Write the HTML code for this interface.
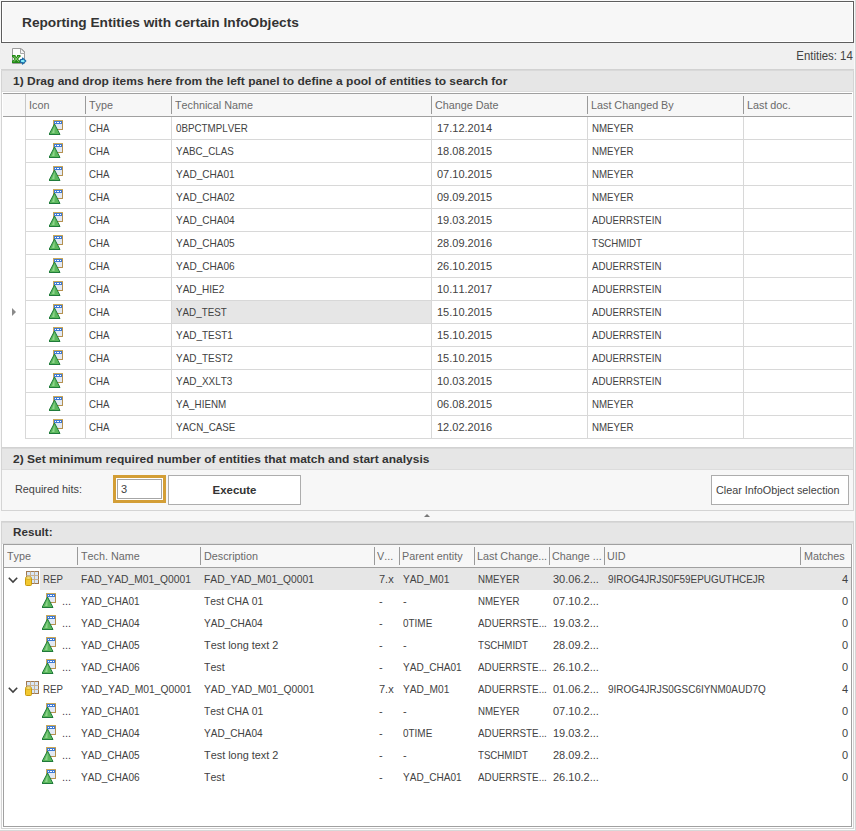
<!DOCTYPE html><html><head><meta charset="utf-8"><style>html,body{margin:0;padding:0;}body{font-kerning:none;width:856px;height:831px;position:relative;overflow:hidden;background:#f0f0f0;font-family:"Liberation Sans", sans-serif;}</style></head><body>
<div style="position:absolute;left:0px;top:0px;width:856px;height:831px;background:#f8f8f8"></div>
<div style="position:absolute;left:855px;top:0px;width:1px;height:831px;background:#d6d6d6"></div>
<div style="position:absolute;left:0px;top:43px;width:854px;height:26px;background:#f0f0f0"></div>
<div style="position:absolute;left:1px;top:1px;width:851px;height:40px;border:1px solid #5e5e5e;background:#f7f7f7;box-shadow:inset 0 0 0 1px #fff"></div>
<div style="position:absolute;top:14.60px;font-size:13.7px;line-height:15.303px;font-weight:bold;color:#333;white-space:pre;left:22px;">Reporting Entities with certain InfoObjects</div>
<svg style="position:absolute;left:12px;top:48px" width="16" height="17" viewBox="0 0 16 17">
<path d="M0.5 0.5 H9 L12.5 4 V15.5 H0.5 Z" fill="#fdfdfd" stroke="#9c9c9c"/>
<path d="M8.5 0.5 V5.5 H12.5" fill="#f4f4f4" stroke="#a8a8a8"/>
<path d="M9 0.5 L12.5 4" stroke="#8a8a8a"/>
<path d="M0 7 H3.5 V9 H0 Z M5 7 H8.5 V9 H5 Z M0 12.5 H8.5 V15 H0 Z" fill="#1f8a14"/>
<path d="M1.5 8 L7 14 M7 8 L1.5 14" stroke="#2b8c1c" stroke-width="2.6"/>
<path d="M1.8 8.3 L6.7 13.7 M6.7 8.3 L1.8 13.7" stroke="#a6e28e" stroke-width="0.8"/>
<path d="M8.5 11.5 H10.5 V10 L13.8 13 L10.5 16 V14.5 H8.5 Z" fill="#86eefa" stroke="#1c6aa6" stroke-width="1.2" stroke-linejoin="round"/>
</svg>
<div style="position:absolute;top:49.87px;font-size:12.3px;line-height:13.739px;font-weight:normal;color:#424242;white-space:pre;transform:scaleX(0.930);transform-origin:100% 0;right:3px;">Entities: 14</div>
<div style="position:absolute;left:1px;top:69px;width:853px;height:378px;background:#fff"></div>
<div style="position:absolute;left:1px;top:69px;width:1px;height:378px;background:#d4d4d4"></div>
<div style="position:absolute;left:853px;top:69px;width:1px;height:378px;background:#d4d4d4"></div>
<div style="position:absolute;left:1px;top:69px;width:853px;height:1px;background:#d2d2d2"></div>
<div style="position:absolute;left:1px;top:70px;width:853px;height:1px;background:#d9d9d9"></div>
<div style="position:absolute;left:2px;top:71px;width:851px;height:20px;background:#e6e6e6"></div>
<div style="position:absolute;left:2px;top:91px;width:851px;height:1px;background:#dcdcdc"></div>
<div style="position:absolute;top:75.05px;font-size:11px;line-height:12.287px;font-weight:bold;color:#333;white-space:pre;transform:scaleX(1.090);transform-origin:0 0;left:13px;">1) Drag and drop items here from the left panel to define a pool of entities to search for</div>
<div style="position:absolute;left:3px;top:93px;width:849px;height:1px;background:#a0a0a0"></div>
<div style="position:absolute;left:3px;top:94px;width:849px;height:22px;background:#f7f7f7"></div>
<div style="position:absolute;left:3px;top:116px;width:849px;height:1px;background:#a0a0a0"></div>
<div style="position:absolute;left:25px;top:94px;width:1px;height:22px;background:#c8c8c8"></div>
<div style="position:absolute;left:85px;top:96px;width:1px;height:18px;background:#9a9a9a"></div>
<div style="position:absolute;left:171px;top:96px;width:1px;height:18px;background:#9a9a9a"></div>
<div style="position:absolute;left:431px;top:96px;width:1px;height:18px;background:#9a9a9a"></div>
<div style="position:absolute;left:587px;top:96px;width:1px;height:18px;background:#9a9a9a"></div>
<div style="position:absolute;left:743px;top:96px;width:1px;height:18px;background:#9a9a9a"></div>
<div style="position:absolute;top:99.05px;font-size:11px;line-height:12.287px;font-weight:normal;color:#6a6a6a;white-space:pre;transform:scaleX(0.980);transform-origin:0 0;left:29px;">Icon</div>
<div style="position:absolute;top:99.05px;font-size:11px;line-height:12.287px;font-weight:normal;color:#6a6a6a;white-space:pre;transform:scaleX(0.980);transform-origin:0 0;left:89px;">Type</div>
<div style="position:absolute;top:99.05px;font-size:11px;line-height:12.287px;font-weight:normal;color:#6a6a6a;white-space:pre;transform:scaleX(0.980);transform-origin:0 0;left:175px;">Technical Name</div>
<div style="position:absolute;top:99.05px;font-size:11px;line-height:12.287px;font-weight:normal;color:#6a6a6a;white-space:pre;transform:scaleX(0.980);transform-origin:0 0;left:435px;">Change Date</div>
<div style="position:absolute;top:99.05px;font-size:11px;line-height:12.287px;font-weight:normal;color:#6a6a6a;white-space:pre;transform:scaleX(0.980);transform-origin:0 0;left:591px;">Last Changed By</div>
<div style="position:absolute;top:99.05px;font-size:11px;line-height:12.287px;font-weight:normal;color:#6a6a6a;white-space:pre;transform:scaleX(0.980);transform-origin:0 0;left:747px;">Last doc.</div>
<div style="position:absolute;left:26px;top:139px;width:826px;height:1px;background:#d8d8d8"></div>
<svg style="position:absolute;left:49px;top:120px" width="15" height="15" viewBox="0 0 15 15">
<rect x="4.5" y="0.5" width="9" height="9" fill="#e3e9f3" stroke="#c9a85a"/>
<path d="M13.5 1 V9.5 H6" fill="none" stroke="#b39050"/>
<rect x="5" y="1" width="8" height="3" fill="#3f7bd6"/>
<rect x="6" y="2" width="1" height="1" fill="#fff"/><rect x="8" y="2" width="2" height="1" fill="#fff"/><rect x="11" y="2" width="1" height="1" fill="#fff"/>
<rect x="5" y="4" width="1" height="5" fill="#3f7bd6"/>
<path d="M5.5 4 L0 14.5 L11 14.5 Z" fill="#5cb85c" stroke="#1f7a3a" stroke-width="1"/>
<path d="M5.5 6 L3 13 L5.5 13 Z" fill="#8fd48f"/>
</svg>
<div style="position:absolute;top:122.05px;font-size:11px;line-height:12.287px;font-weight:normal;color:#424242;white-space:pre;transform:scaleX(0.880);transform-origin:0 0;left:89px;">CHA</div>
<div style="position:absolute;top:122.05px;font-size:11px;line-height:12.287px;font-weight:normal;color:#424242;white-space:pre;transform:scaleX(0.889);transform-origin:0 0;left:176px;">0BPCTMPLVER</div>
<div style="position:absolute;top:122.05px;font-size:11px;line-height:12.287px;font-weight:normal;color:#424242;white-space:pre;left:437px;">17.12.2014</div>
<div style="position:absolute;top:122.05px;font-size:11px;line-height:12.287px;font-weight:normal;color:#424242;white-space:pre;transform:scaleX(0.880);transform-origin:0 0;left:592px;">NMEYER</div>
<div style="position:absolute;left:26px;top:162px;width:826px;height:1px;background:#d8d8d8"></div>
<svg style="position:absolute;left:49px;top:143px" width="15" height="15" viewBox="0 0 15 15">
<rect x="4.5" y="0.5" width="9" height="9" fill="#e3e9f3" stroke="#c9a85a"/>
<path d="M13.5 1 V9.5 H6" fill="none" stroke="#b39050"/>
<rect x="5" y="1" width="8" height="3" fill="#3f7bd6"/>
<rect x="6" y="2" width="1" height="1" fill="#fff"/><rect x="8" y="2" width="2" height="1" fill="#fff"/><rect x="11" y="2" width="1" height="1" fill="#fff"/>
<rect x="5" y="4" width="1" height="5" fill="#3f7bd6"/>
<path d="M5.5 4 L0 14.5 L11 14.5 Z" fill="#5cb85c" stroke="#1f7a3a" stroke-width="1"/>
<path d="M5.5 6 L3 13 L5.5 13 Z" fill="#8fd48f"/>
</svg>
<div style="position:absolute;top:145.04px;font-size:11px;line-height:12.287px;font-weight:normal;color:#424242;white-space:pre;transform:scaleX(0.880);transform-origin:0 0;left:89px;">CHA</div>
<div style="position:absolute;top:145.04px;font-size:11px;line-height:12.287px;font-weight:normal;color:#424242;white-space:pre;transform:scaleX(0.891);transform-origin:0 0;left:176px;">YABC_CLAS</div>
<div style="position:absolute;top:145.04px;font-size:11px;line-height:12.287px;font-weight:normal;color:#424242;white-space:pre;left:437px;">18.08.2015</div>
<div style="position:absolute;top:145.04px;font-size:11px;line-height:12.287px;font-weight:normal;color:#424242;white-space:pre;transform:scaleX(0.880);transform-origin:0 0;left:592px;">NMEYER</div>
<div style="position:absolute;left:26px;top:185px;width:826px;height:1px;background:#d8d8d8"></div>
<svg style="position:absolute;left:49px;top:166px" width="15" height="15" viewBox="0 0 15 15">
<rect x="4.5" y="0.5" width="9" height="9" fill="#e3e9f3" stroke="#c9a85a"/>
<path d="M13.5 1 V9.5 H6" fill="none" stroke="#b39050"/>
<rect x="5" y="1" width="8" height="3" fill="#3f7bd6"/>
<rect x="6" y="2" width="1" height="1" fill="#fff"/><rect x="8" y="2" width="2" height="1" fill="#fff"/><rect x="11" y="2" width="1" height="1" fill="#fff"/>
<rect x="5" y="4" width="1" height="5" fill="#3f7bd6"/>
<path d="M5.5 4 L0 14.5 L11 14.5 Z" fill="#5cb85c" stroke="#1f7a3a" stroke-width="1"/>
<path d="M5.5 6 L3 13 L5.5 13 Z" fill="#8fd48f"/>
</svg>
<div style="position:absolute;top:168.04px;font-size:11px;line-height:12.287px;font-weight:normal;color:#424242;white-space:pre;transform:scaleX(0.880);transform-origin:0 0;left:89px;">CHA</div>
<div style="position:absolute;top:168.04px;font-size:11px;line-height:12.287px;font-weight:normal;color:#424242;white-space:pre;transform:scaleX(0.914);transform-origin:0 0;left:176px;">YAD_CHA01</div>
<div style="position:absolute;top:168.04px;font-size:11px;line-height:12.287px;font-weight:normal;color:#424242;white-space:pre;left:437px;">07.10.2015</div>
<div style="position:absolute;top:168.04px;font-size:11px;line-height:12.287px;font-weight:normal;color:#424242;white-space:pre;transform:scaleX(0.880);transform-origin:0 0;left:592px;">NMEYER</div>
<div style="position:absolute;left:26px;top:208px;width:826px;height:1px;background:#d8d8d8"></div>
<svg style="position:absolute;left:49px;top:189px" width="15" height="15" viewBox="0 0 15 15">
<rect x="4.5" y="0.5" width="9" height="9" fill="#e3e9f3" stroke="#c9a85a"/>
<path d="M13.5 1 V9.5 H6" fill="none" stroke="#b39050"/>
<rect x="5" y="1" width="8" height="3" fill="#3f7bd6"/>
<rect x="6" y="2" width="1" height="1" fill="#fff"/><rect x="8" y="2" width="2" height="1" fill="#fff"/><rect x="11" y="2" width="1" height="1" fill="#fff"/>
<rect x="5" y="4" width="1" height="5" fill="#3f7bd6"/>
<path d="M5.5 4 L0 14.5 L11 14.5 Z" fill="#5cb85c" stroke="#1f7a3a" stroke-width="1"/>
<path d="M5.5 6 L3 13 L5.5 13 Z" fill="#8fd48f"/>
</svg>
<div style="position:absolute;top:191.04px;font-size:11px;line-height:12.287px;font-weight:normal;color:#424242;white-space:pre;transform:scaleX(0.880);transform-origin:0 0;left:89px;">CHA</div>
<div style="position:absolute;top:191.04px;font-size:11px;line-height:12.287px;font-weight:normal;color:#424242;white-space:pre;transform:scaleX(0.914);transform-origin:0 0;left:176px;">YAD_CHA02</div>
<div style="position:absolute;top:191.04px;font-size:11px;line-height:12.287px;font-weight:normal;color:#424242;white-space:pre;left:437px;">09.09.2015</div>
<div style="position:absolute;top:191.04px;font-size:11px;line-height:12.287px;font-weight:normal;color:#424242;white-space:pre;transform:scaleX(0.880);transform-origin:0 0;left:592px;">NMEYER</div>
<div style="position:absolute;left:26px;top:231px;width:826px;height:1px;background:#d8d8d8"></div>
<svg style="position:absolute;left:49px;top:212px" width="15" height="15" viewBox="0 0 15 15">
<rect x="4.5" y="0.5" width="9" height="9" fill="#e3e9f3" stroke="#c9a85a"/>
<path d="M13.5 1 V9.5 H6" fill="none" stroke="#b39050"/>
<rect x="5" y="1" width="8" height="3" fill="#3f7bd6"/>
<rect x="6" y="2" width="1" height="1" fill="#fff"/><rect x="8" y="2" width="2" height="1" fill="#fff"/><rect x="11" y="2" width="1" height="1" fill="#fff"/>
<rect x="5" y="4" width="1" height="5" fill="#3f7bd6"/>
<path d="M5.5 4 L0 14.5 L11 14.5 Z" fill="#5cb85c" stroke="#1f7a3a" stroke-width="1"/>
<path d="M5.5 6 L3 13 L5.5 13 Z" fill="#8fd48f"/>
</svg>
<div style="position:absolute;top:214.04px;font-size:11px;line-height:12.287px;font-weight:normal;color:#424242;white-space:pre;transform:scaleX(0.880);transform-origin:0 0;left:89px;">CHA</div>
<div style="position:absolute;top:214.04px;font-size:11px;line-height:12.287px;font-weight:normal;color:#424242;white-space:pre;transform:scaleX(0.914);transform-origin:0 0;left:176px;">YAD_CHA04</div>
<div style="position:absolute;top:214.04px;font-size:11px;line-height:12.287px;font-weight:normal;color:#424242;white-space:pre;left:437px;">19.03.2015</div>
<div style="position:absolute;top:214.04px;font-size:11px;line-height:12.287px;font-weight:normal;color:#424242;white-space:pre;transform:scaleX(0.880);transform-origin:0 0;left:592px;">ADUERRSTEIN</div>
<div style="position:absolute;left:26px;top:254px;width:826px;height:1px;background:#d8d8d8"></div>
<svg style="position:absolute;left:49px;top:235px" width="15" height="15" viewBox="0 0 15 15">
<rect x="4.5" y="0.5" width="9" height="9" fill="#e3e9f3" stroke="#c9a85a"/>
<path d="M13.5 1 V9.5 H6" fill="none" stroke="#b39050"/>
<rect x="5" y="1" width="8" height="3" fill="#3f7bd6"/>
<rect x="6" y="2" width="1" height="1" fill="#fff"/><rect x="8" y="2" width="2" height="1" fill="#fff"/><rect x="11" y="2" width="1" height="1" fill="#fff"/>
<rect x="5" y="4" width="1" height="5" fill="#3f7bd6"/>
<path d="M5.5 4 L0 14.5 L11 14.5 Z" fill="#5cb85c" stroke="#1f7a3a" stroke-width="1"/>
<path d="M5.5 6 L3 13 L5.5 13 Z" fill="#8fd48f"/>
</svg>
<div style="position:absolute;top:237.04px;font-size:11px;line-height:12.287px;font-weight:normal;color:#424242;white-space:pre;transform:scaleX(0.880);transform-origin:0 0;left:89px;">CHA</div>
<div style="position:absolute;top:237.04px;font-size:11px;line-height:12.287px;font-weight:normal;color:#424242;white-space:pre;transform:scaleX(0.914);transform-origin:0 0;left:176px;">YAD_CHA05</div>
<div style="position:absolute;top:237.04px;font-size:11px;line-height:12.287px;font-weight:normal;color:#424242;white-space:pre;left:437px;">28.09.2016</div>
<div style="position:absolute;top:237.04px;font-size:11px;line-height:12.287px;font-weight:normal;color:#424242;white-space:pre;transform:scaleX(0.880);transform-origin:0 0;left:592px;">TSCHMIDT</div>
<div style="position:absolute;left:26px;top:277px;width:826px;height:1px;background:#d8d8d8"></div>
<svg style="position:absolute;left:49px;top:258px" width="15" height="15" viewBox="0 0 15 15">
<rect x="4.5" y="0.5" width="9" height="9" fill="#e3e9f3" stroke="#c9a85a"/>
<path d="M13.5 1 V9.5 H6" fill="none" stroke="#b39050"/>
<rect x="5" y="1" width="8" height="3" fill="#3f7bd6"/>
<rect x="6" y="2" width="1" height="1" fill="#fff"/><rect x="8" y="2" width="2" height="1" fill="#fff"/><rect x="11" y="2" width="1" height="1" fill="#fff"/>
<rect x="5" y="4" width="1" height="5" fill="#3f7bd6"/>
<path d="M5.5 4 L0 14.5 L11 14.5 Z" fill="#5cb85c" stroke="#1f7a3a" stroke-width="1"/>
<path d="M5.5 6 L3 13 L5.5 13 Z" fill="#8fd48f"/>
</svg>
<div style="position:absolute;top:260.05px;font-size:11px;line-height:12.287px;font-weight:normal;color:#424242;white-space:pre;transform:scaleX(0.880);transform-origin:0 0;left:89px;">CHA</div>
<div style="position:absolute;top:260.05px;font-size:11px;line-height:12.287px;font-weight:normal;color:#424242;white-space:pre;transform:scaleX(0.914);transform-origin:0 0;left:176px;">YAD_CHA06</div>
<div style="position:absolute;top:260.05px;font-size:11px;line-height:12.287px;font-weight:normal;color:#424242;white-space:pre;left:437px;">26.10.2015</div>
<div style="position:absolute;top:260.05px;font-size:11px;line-height:12.287px;font-weight:normal;color:#424242;white-space:pre;transform:scaleX(0.880);transform-origin:0 0;left:592px;">ADUERRSTEIN</div>
<div style="position:absolute;left:26px;top:300px;width:826px;height:1px;background:#d8d8d8"></div>
<svg style="position:absolute;left:49px;top:281px" width="15" height="15" viewBox="0 0 15 15">
<rect x="4.5" y="0.5" width="9" height="9" fill="#e3e9f3" stroke="#c9a85a"/>
<path d="M13.5 1 V9.5 H6" fill="none" stroke="#b39050"/>
<rect x="5" y="1" width="8" height="3" fill="#3f7bd6"/>
<rect x="6" y="2" width="1" height="1" fill="#fff"/><rect x="8" y="2" width="2" height="1" fill="#fff"/><rect x="11" y="2" width="1" height="1" fill="#fff"/>
<rect x="5" y="4" width="1" height="5" fill="#3f7bd6"/>
<path d="M5.5 4 L0 14.5 L11 14.5 Z" fill="#5cb85c" stroke="#1f7a3a" stroke-width="1"/>
<path d="M5.5 6 L3 13 L5.5 13 Z" fill="#8fd48f"/>
</svg>
<div style="position:absolute;top:283.05px;font-size:11px;line-height:12.287px;font-weight:normal;color:#424242;white-space:pre;transform:scaleX(0.880);transform-origin:0 0;left:89px;">CHA</div>
<div style="position:absolute;top:283.05px;font-size:11px;line-height:12.287px;font-weight:normal;color:#424242;white-space:pre;transform:scaleX(0.908);transform-origin:0 0;left:176px;">YAD_HIE2</div>
<div style="position:absolute;top:283.05px;font-size:11px;line-height:12.287px;font-weight:normal;color:#424242;white-space:pre;left:437px;">10.11.2017</div>
<div style="position:absolute;top:283.05px;font-size:11px;line-height:12.287px;font-weight:normal;color:#424242;white-space:pre;transform:scaleX(0.880);transform-origin:0 0;left:592px;">ADUERRSTEIN</div>
<div style="position:absolute;left:172px;top:301px;width:259px;height:22px;background:#e6e6e6"></div>
<svg style="position:absolute;left:12px;top:308px" width="5" height="8"><path d="M0 0 L4 4 L0 8 Z" fill="#8a8a8a"/></svg>
<div style="position:absolute;left:26px;top:323px;width:826px;height:1px;background:#d8d8d8"></div>
<svg style="position:absolute;left:49px;top:304px" width="15" height="15" viewBox="0 0 15 15">
<rect x="4.5" y="0.5" width="9" height="9" fill="#e3e9f3" stroke="#c9a85a"/>
<path d="M13.5 1 V9.5 H6" fill="none" stroke="#b39050"/>
<rect x="5" y="1" width="8" height="3" fill="#3f7bd6"/>
<rect x="6" y="2" width="1" height="1" fill="#fff"/><rect x="8" y="2" width="2" height="1" fill="#fff"/><rect x="11" y="2" width="1" height="1" fill="#fff"/>
<rect x="5" y="4" width="1" height="5" fill="#3f7bd6"/>
<path d="M5.5 4 L0 14.5 L11 14.5 Z" fill="#5cb85c" stroke="#1f7a3a" stroke-width="1"/>
<path d="M5.5 6 L3 13 L5.5 13 Z" fill="#8fd48f"/>
</svg>
<div style="position:absolute;top:306.05px;font-size:11px;line-height:12.287px;font-weight:normal;color:#424242;white-space:pre;transform:scaleX(0.880);transform-origin:0 0;left:89px;">CHA</div>
<div style="position:absolute;top:306.05px;font-size:11px;line-height:12.287px;font-weight:normal;color:#424242;white-space:pre;transform:scaleX(0.893);transform-origin:0 0;left:176px;">YAD_TEST</div>
<div style="position:absolute;top:306.05px;font-size:11px;line-height:12.287px;font-weight:normal;color:#424242;white-space:pre;left:437px;">15.10.2015</div>
<div style="position:absolute;top:306.05px;font-size:11px;line-height:12.287px;font-weight:normal;color:#424242;white-space:pre;transform:scaleX(0.880);transform-origin:0 0;left:592px;">ADUERRSTEIN</div>
<div style="position:absolute;left:26px;top:346px;width:826px;height:1px;background:#d8d8d8"></div>
<svg style="position:absolute;left:49px;top:327px" width="15" height="15" viewBox="0 0 15 15">
<rect x="4.5" y="0.5" width="9" height="9" fill="#e3e9f3" stroke="#c9a85a"/>
<path d="M13.5 1 V9.5 H6" fill="none" stroke="#b39050"/>
<rect x="5" y="1" width="8" height="3" fill="#3f7bd6"/>
<rect x="6" y="2" width="1" height="1" fill="#fff"/><rect x="8" y="2" width="2" height="1" fill="#fff"/><rect x="11" y="2" width="1" height="1" fill="#fff"/>
<rect x="5" y="4" width="1" height="5" fill="#3f7bd6"/>
<path d="M5.5 4 L0 14.5 L11 14.5 Z" fill="#5cb85c" stroke="#1f7a3a" stroke-width="1"/>
<path d="M5.5 6 L3 13 L5.5 13 Z" fill="#8fd48f"/>
</svg>
<div style="position:absolute;top:329.05px;font-size:11px;line-height:12.287px;font-weight:normal;color:#424242;white-space:pre;transform:scaleX(0.880);transform-origin:0 0;left:89px;">CHA</div>
<div style="position:absolute;top:329.05px;font-size:11px;line-height:12.287px;font-weight:normal;color:#424242;white-space:pre;transform:scaleX(0.903);transform-origin:0 0;left:176px;">YAD_TEST1</div>
<div style="position:absolute;top:329.05px;font-size:11px;line-height:12.287px;font-weight:normal;color:#424242;white-space:pre;left:437px;">15.10.2015</div>
<div style="position:absolute;top:329.05px;font-size:11px;line-height:12.287px;font-weight:normal;color:#424242;white-space:pre;transform:scaleX(0.880);transform-origin:0 0;left:592px;">ADUERRSTEIN</div>
<div style="position:absolute;left:26px;top:369px;width:826px;height:1px;background:#d8d8d8"></div>
<svg style="position:absolute;left:49px;top:350px" width="15" height="15" viewBox="0 0 15 15">
<rect x="4.5" y="0.5" width="9" height="9" fill="#e3e9f3" stroke="#c9a85a"/>
<path d="M13.5 1 V9.5 H6" fill="none" stroke="#b39050"/>
<rect x="5" y="1" width="8" height="3" fill="#3f7bd6"/>
<rect x="6" y="2" width="1" height="1" fill="#fff"/><rect x="8" y="2" width="2" height="1" fill="#fff"/><rect x="11" y="2" width="1" height="1" fill="#fff"/>
<rect x="5" y="4" width="1" height="5" fill="#3f7bd6"/>
<path d="M5.5 4 L0 14.5 L11 14.5 Z" fill="#5cb85c" stroke="#1f7a3a" stroke-width="1"/>
<path d="M5.5 6 L3 13 L5.5 13 Z" fill="#8fd48f"/>
</svg>
<div style="position:absolute;top:352.05px;font-size:11px;line-height:12.287px;font-weight:normal;color:#424242;white-space:pre;transform:scaleX(0.880);transform-origin:0 0;left:89px;">CHA</div>
<div style="position:absolute;top:352.05px;font-size:11px;line-height:12.287px;font-weight:normal;color:#424242;white-space:pre;transform:scaleX(0.903);transform-origin:0 0;left:176px;">YAD_TEST2</div>
<div style="position:absolute;top:352.05px;font-size:11px;line-height:12.287px;font-weight:normal;color:#424242;white-space:pre;left:437px;">15.10.2015</div>
<div style="position:absolute;top:352.05px;font-size:11px;line-height:12.287px;font-weight:normal;color:#424242;white-space:pre;transform:scaleX(0.880);transform-origin:0 0;left:592px;">ADUERRSTEIN</div>
<div style="position:absolute;left:26px;top:392px;width:826px;height:1px;background:#d8d8d8"></div>
<svg style="position:absolute;left:49px;top:373px" width="15" height="15" viewBox="0 0 15 15">
<rect x="4.5" y="0.5" width="9" height="9" fill="#e3e9f3" stroke="#c9a85a"/>
<path d="M13.5 1 V9.5 H6" fill="none" stroke="#b39050"/>
<rect x="5" y="1" width="8" height="3" fill="#3f7bd6"/>
<rect x="6" y="2" width="1" height="1" fill="#fff"/><rect x="8" y="2" width="2" height="1" fill="#fff"/><rect x="11" y="2" width="1" height="1" fill="#fff"/>
<rect x="5" y="4" width="1" height="5" fill="#3f7bd6"/>
<path d="M5.5 4 L0 14.5 L11 14.5 Z" fill="#5cb85c" stroke="#1f7a3a" stroke-width="1"/>
<path d="M5.5 6 L3 13 L5.5 13 Z" fill="#8fd48f"/>
</svg>
<div style="position:absolute;top:375.05px;font-size:11px;line-height:12.287px;font-weight:normal;color:#424242;white-space:pre;transform:scaleX(0.880);transform-origin:0 0;left:89px;">CHA</div>
<div style="position:absolute;top:375.05px;font-size:11px;line-height:12.287px;font-weight:normal;color:#424242;white-space:pre;transform:scaleX(0.904);transform-origin:0 0;left:176px;">YAD_XXLT3</div>
<div style="position:absolute;top:375.05px;font-size:11px;line-height:12.287px;font-weight:normal;color:#424242;white-space:pre;left:437px;">10.03.2015</div>
<div style="position:absolute;top:375.05px;font-size:11px;line-height:12.287px;font-weight:normal;color:#424242;white-space:pre;transform:scaleX(0.880);transform-origin:0 0;left:592px;">ADUERRSTEIN</div>
<div style="position:absolute;left:26px;top:415px;width:826px;height:1px;background:#d8d8d8"></div>
<svg style="position:absolute;left:49px;top:396px" width="15" height="15" viewBox="0 0 15 15">
<rect x="4.5" y="0.5" width="9" height="9" fill="#e3e9f3" stroke="#c9a85a"/>
<path d="M13.5 1 V9.5 H6" fill="none" stroke="#b39050"/>
<rect x="5" y="1" width="8" height="3" fill="#3f7bd6"/>
<rect x="6" y="2" width="1" height="1" fill="#fff"/><rect x="8" y="2" width="2" height="1" fill="#fff"/><rect x="11" y="2" width="1" height="1" fill="#fff"/>
<rect x="5" y="4" width="1" height="5" fill="#3f7bd6"/>
<path d="M5.5 4 L0 14.5 L11 14.5 Z" fill="#5cb85c" stroke="#1f7a3a" stroke-width="1"/>
<path d="M5.5 6 L3 13 L5.5 13 Z" fill="#8fd48f"/>
</svg>
<div style="position:absolute;top:398.05px;font-size:11px;line-height:12.287px;font-weight:normal;color:#424242;white-space:pre;transform:scaleX(0.880);transform-origin:0 0;left:89px;">CHA</div>
<div style="position:absolute;top:398.05px;font-size:11px;line-height:12.287px;font-weight:normal;color:#424242;white-space:pre;transform:scaleX(0.893);transform-origin:0 0;left:176px;">YA_HIENM</div>
<div style="position:absolute;top:398.05px;font-size:11px;line-height:12.287px;font-weight:normal;color:#424242;white-space:pre;left:437px;">06.08.2015</div>
<div style="position:absolute;top:398.05px;font-size:11px;line-height:12.287px;font-weight:normal;color:#424242;white-space:pre;transform:scaleX(0.880);transform-origin:0 0;left:592px;">NMEYER</div>
<div style="position:absolute;left:26px;top:438px;width:826px;height:1px;background:#d8d8d8"></div>
<svg style="position:absolute;left:49px;top:419px" width="15" height="15" viewBox="0 0 15 15">
<rect x="4.5" y="0.5" width="9" height="9" fill="#e3e9f3" stroke="#c9a85a"/>
<path d="M13.5 1 V9.5 H6" fill="none" stroke="#b39050"/>
<rect x="5" y="1" width="8" height="3" fill="#3f7bd6"/>
<rect x="6" y="2" width="1" height="1" fill="#fff"/><rect x="8" y="2" width="2" height="1" fill="#fff"/><rect x="11" y="2" width="1" height="1" fill="#fff"/>
<rect x="5" y="4" width="1" height="5" fill="#3f7bd6"/>
<path d="M5.5 4 L0 14.5 L11 14.5 Z" fill="#5cb85c" stroke="#1f7a3a" stroke-width="1"/>
<path d="M5.5 6 L3 13 L5.5 13 Z" fill="#8fd48f"/>
</svg>
<div style="position:absolute;top:421.05px;font-size:11px;line-height:12.287px;font-weight:normal;color:#424242;white-space:pre;transform:scaleX(0.880);transform-origin:0 0;left:89px;">CHA</div>
<div style="position:absolute;top:421.05px;font-size:11px;line-height:12.287px;font-weight:normal;color:#424242;white-space:pre;transform:scaleX(0.891);transform-origin:0 0;left:176px;">YACN_CASE</div>
<div style="position:absolute;top:421.05px;font-size:11px;line-height:12.287px;font-weight:normal;color:#424242;white-space:pre;left:437px;">12.02.2016</div>
<div style="position:absolute;top:421.05px;font-size:11px;line-height:12.287px;font-weight:normal;color:#424242;white-space:pre;transform:scaleX(0.880);transform-origin:0 0;left:592px;">NMEYER</div>
<div style="position:absolute;left:25px;top:117px;width:1px;height:322px;background:#d8d8d8"></div>
<div style="position:absolute;left:85px;top:117px;width:1px;height:322px;background:#d8d8d8"></div>
<div style="position:absolute;left:171px;top:117px;width:1px;height:322px;background:#d8d8d8"></div>
<div style="position:absolute;left:431px;top:117px;width:1px;height:322px;background:#d8d8d8"></div>
<div style="position:absolute;left:587px;top:117px;width:1px;height:322px;background:#d8d8d8"></div>
<div style="position:absolute;left:743px;top:117px;width:1px;height:322px;background:#d8d8d8"></div>
<div style="position:absolute;left:1px;top:447px;width:853px;height:1px;background:#d2d2d2"></div>
<div style="position:absolute;left:1px;top:448px;width:853px;height:1px;background:#d9d9d9"></div>
<div style="position:absolute;left:2px;top:449px;width:851px;height:20px;background:#e6e6e6"></div>
<div style="position:absolute;left:1px;top:447px;width:1px;height:64px;background:#d4d4d4"></div>
<div style="position:absolute;left:853px;top:447px;width:1px;height:64px;background:#d4d4d4"></div>
<div style="position:absolute;top:453.05px;font-size:11px;line-height:12.287px;font-weight:bold;color:#333;white-space:pre;transform:scaleX(1.090);transform-origin:0 0;left:13px;">2) Set minimum required number of entities that match and start analysis</div>
<div style="position:absolute;left:2px;top:469px;width:851px;height:41px;background:#f7f7f7"></div>
<div style="position:absolute;left:2px;top:469px;width:851px;height:1px;background:#dcdcdc"></div>
<div style="position:absolute;left:1px;top:510px;width:853px;height:1px;background:#d4d4d4"></div>
<div style="position:absolute;top:483.05px;font-size:11px;line-height:12.287px;font-weight:normal;color:#424242;white-space:pre;transform:scaleX(0.986);transform-origin:0 0;left:15px;">Required hits:</div>
<div style="position:absolute;left:113px;top:475px;width:47px;height:22px;border:3px solid #d39e36;background:#fff"></div>
<div style="position:absolute;left:117px;top:479px;width:43px;height:18px;border:1px solid #a6a6a6;background:#fff"></div>
<div style="position:absolute;top:483.05px;font-size:11px;line-height:12.287px;font-weight:normal;color:#424242;white-space:pre;left:121px;">3</div>
<div style="position:absolute;left:168px;top:475px;width:131px;height:28px;border:1px solid #adadad;background:#fff"></div>
<div style="position:absolute;left:168px;top:483px;width:133px;text-align:center;font-size:11px;line-height:14px;font-weight:bold;color:#333;transform:scaleX(1.04)">Execute</div>
<div style="position:absolute;left:711px;top:475px;width:136px;height:28px;border:1px solid #adadad;background:#fff"></div>
<div style="position:absolute;top:484.05px;font-size:11px;line-height:12.287px;font-weight:normal;color:#424242;white-space:pre;transform:scaleX(0.981);transform-origin:0 0;left:716px;">Clear InfoObject selection</div>
<div style="position:absolute;left:1px;top:511px;width:854px;height:10px;background:#f7f7f7"></div>
<svg style="position:absolute;left:424px;top:514px" width="6" height="3"><path d="M0 3 L3 0 L6 3 Z" fill="#787878"/></svg>
<div style="position:absolute;left:1px;top:521px;width:853px;height:1px;background:#d2d2d2"></div>
<div style="position:absolute;left:1px;top:522px;width:853px;height:1px;background:#d9d9d9"></div>
<div style="position:absolute;left:2px;top:523px;width:851px;height:20px;background:#e6e6e6"></div>
<div style="position:absolute;left:1px;top:521px;width:1px;height:308px;background:#d4d4d4"></div>
<div style="position:absolute;left:853px;top:521px;width:1px;height:308px;background:#d4d4d4"></div>
<div style="position:absolute;left:1px;top:828px;width:853px;height:1px;background:#d4d4d4"></div>
<div style="position:absolute;left:0px;top:829px;width:855px;height:1px;background:#fdfdfd"></div>
<div style="position:absolute;left:0px;top:830px;width:856px;height:1px;background:#d8d8d8"></div>
<div style="position:absolute;top:526.04px;font-size:11px;line-height:12.287px;font-weight:bold;color:#333;white-space:pre;transform:scaleX(1.060);transform-origin:0 0;left:13px;">Result:</div>
<div style="position:absolute;left:2px;top:543px;width:851px;height:285px;background:#fff"></div>
<div style="position:absolute;left:2px;top:543px;width:851px;height:1px;background:#dcdcdc"></div>
<div style="position:absolute;left:3px;top:544px;width:847px;height:281px;border:1px solid #a0a0a0;background:#fff"></div>
<div style="position:absolute;left:4px;top:545px;width:847px;height:22px;background:#f7f7f7"></div>
<div style="position:absolute;left:4px;top:567px;width:847px;height:1px;background:#a0a0a0"></div>
<div style="position:absolute;left:77px;top:547px;width:1px;height:18px;background:#9a9a9a"></div>
<div style="position:absolute;left:200px;top:547px;width:1px;height:18px;background:#9a9a9a"></div>
<div style="position:absolute;left:374px;top:547px;width:1px;height:18px;background:#9a9a9a"></div>
<div style="position:absolute;left:399px;top:547px;width:1px;height:18px;background:#9a9a9a"></div>
<div style="position:absolute;left:474px;top:547px;width:1px;height:18px;background:#9a9a9a"></div>
<div style="position:absolute;left:549px;top:547px;width:1px;height:18px;background:#9a9a9a"></div>
<div style="position:absolute;left:604px;top:547px;width:1px;height:18px;background:#9a9a9a"></div>
<div style="position:absolute;left:800px;top:547px;width:1px;height:18px;background:#9a9a9a"></div>
<div style="position:absolute;top:550.04px;font-size:11px;line-height:12.287px;font-weight:normal;color:#6a6a6a;white-space:pre;transform:scaleX(0.980);transform-origin:0 0;left:7px;">Type</div>
<div style="position:absolute;top:550.04px;font-size:11px;line-height:12.287px;font-weight:normal;color:#6a6a6a;white-space:pre;transform:scaleX(0.980);transform-origin:0 0;left:81px;">Tech. Name</div>
<div style="position:absolute;top:550.04px;font-size:11px;line-height:12.287px;font-weight:normal;color:#6a6a6a;white-space:pre;transform:scaleX(0.980);transform-origin:0 0;left:204px;">Description</div>
<div style="position:absolute;top:550.04px;font-size:11px;line-height:12.287px;font-weight:normal;color:#6a6a6a;white-space:pre;transform:scaleX(0.980);transform-origin:0 0;left:377px;">V...</div>
<div style="position:absolute;top:550.04px;font-size:11px;line-height:12.287px;font-weight:normal;color:#6a6a6a;white-space:pre;transform:scaleX(0.980);transform-origin:0 0;left:402px;">Parent entity</div>
<div style="position:absolute;top:550.04px;font-size:11px;line-height:12.287px;font-weight:normal;color:#6a6a6a;white-space:pre;transform:scaleX(0.980);transform-origin:0 0;left:477px;">Last Change...</div>
<div style="position:absolute;top:550.04px;font-size:11px;line-height:12.287px;font-weight:normal;color:#6a6a6a;white-space:pre;transform:scaleX(0.980);transform-origin:0 0;left:552px;">Change ...</div>
<div style="position:absolute;top:550.04px;font-size:11px;line-height:12.287px;font-weight:normal;color:#6a6a6a;white-space:pre;transform:scaleX(0.980);transform-origin:0 0;left:607px;">UID</div>
<div style="position:absolute;top:550.04px;font-size:11px;line-height:12.287px;font-weight:normal;color:#6a6a6a;white-space:pre;transform:scaleX(0.980);transform-origin:0 0;left:804px;">Matches</div>
<div style="position:absolute;left:40px;top:568px;width:811px;height:22px;background:#e6e6e6"></div>
<svg style="position:absolute;left:8px;top:577px" width="11" height="7"><path d="M0.8 0.8 L5 5 L9.2 0.8" fill="none" stroke="#404040" stroke-width="1.6"/></svg>
<svg style="position:absolute;left:25px;top:571px" width="15" height="16" viewBox="0 0 15 16">
<rect x="1.5" y="0.5" width="12" height="12" fill="#d8e6f6" stroke="#a07850"/>
<path d="M1.5 4.5 H13.5 M1.5 8.5 H13.5 M5.5 0.5 V12.5 M9.5 0.5 V12.5" stroke="#c8b090" stroke-width="1"/>
<rect x="0.5" y="6.5" width="6" height="8" rx="1" fill="#f2c830" stroke="#c89a10"/>
<ellipse cx="3.5" cy="7" rx="3" ry="1.3" fill="#fbe88a" stroke="#c89a10" stroke-width="0.8"/>
</svg>
<div style="position:absolute;top:573.04px;font-size:11px;line-height:12.287px;font-weight:normal;color:#424242;white-space:pre;transform:scaleX(0.880);transform-origin:0 0;left:43px;">REP</div>
<div style="position:absolute;top:573.04px;font-size:11px;line-height:12.287px;font-weight:normal;color:#424242;white-space:pre;transform:scaleX(0.936);transform-origin:0 0;left:81px;">FAD_YAD_M01_Q0001</div>
<div style="position:absolute;top:573.04px;font-size:11px;line-height:12.287px;font-weight:normal;color:#424242;white-space:pre;transform:scaleX(0.936);transform-origin:0 0;left:204px;">FAD_YAD_M01_Q0001</div>
<div style="position:absolute;top:573.04px;font-size:11px;line-height:12.287px;font-weight:normal;color:#424242;white-space:pre;left:379px;">7.x</div>
<div style="position:absolute;top:573.04px;font-size:11px;line-height:12.287px;font-weight:normal;color:#424242;white-space:pre;transform:scaleX(0.924);transform-origin:0 0;left:403px;">YAD_M01</div>
<div style="position:absolute;top:573.04px;font-size:11px;line-height:12.287px;font-weight:normal;color:#424242;white-space:pre;transform:scaleX(0.880);transform-origin:0 0;left:478px;">NMEYER</div>
<div style="position:absolute;top:573.04px;font-size:11px;line-height:12.287px;font-weight:normal;color:#424242;white-space:pre;left:553px;">30.06.2...</div>
<div style="position:absolute;top:573.04px;font-size:11px;line-height:12.287px;font-weight:normal;color:#424242;white-space:pre;transform:scaleX(0.901);transform-origin:0 0;left:608px;">9IROG4JRJS0F59EPUGUTHCEJR</div>
<div style="position:absolute;top:573.04px;font-size:11px;line-height:12.287px;font-weight:normal;color:#424242;white-space:pre;right:8px;">4</div>
<svg style="position:absolute;left:42px;top:593px" width="15" height="15" viewBox="0 0 15 15">
<rect x="4.5" y="0.5" width="9" height="9" fill="#e3e9f3" stroke="#c9a85a"/>
<path d="M13.5 1 V9.5 H6" fill="none" stroke="#b39050"/>
<rect x="5" y="1" width="8" height="3" fill="#3f7bd6"/>
<rect x="6" y="2" width="1" height="1" fill="#fff"/><rect x="8" y="2" width="2" height="1" fill="#fff"/><rect x="11" y="2" width="1" height="1" fill="#fff"/>
<rect x="5" y="4" width="1" height="5" fill="#3f7bd6"/>
<path d="M5.5 4 L0 14.5 L11 14.5 Z" fill="#5cb85c" stroke="#1f7a3a" stroke-width="1"/>
<path d="M5.5 6 L3 13 L5.5 13 Z" fill="#8fd48f"/>
</svg>
<div style="position:absolute;top:595.04px;font-size:11px;line-height:12.287px;font-weight:normal;color:#4a4050;white-space:pre;left:62px;">...</div>
<div style="position:absolute;top:595.04px;font-size:11px;line-height:12.287px;font-weight:normal;color:#424242;white-space:pre;transform:scaleX(0.914);transform-origin:0 0;left:81px;">YAD_CHA01</div>
<div style="position:absolute;top:595.04px;font-size:11px;line-height:12.287px;font-weight:normal;color:#424242;white-space:pre;transform:scaleX(0.943);transform-origin:0 0;left:204px;">Test CHA 01</div>
<div style="position:absolute;top:595.04px;font-size:11px;line-height:12.287px;font-weight:normal;color:#424242;white-space:pre;left:379px;">-</div>
<div style="position:absolute;top:595.04px;font-size:11px;line-height:12.287px;font-weight:normal;color:#424242;white-space:pre;left:403px;">-</div>
<div style="position:absolute;top:595.04px;font-size:11px;line-height:12.287px;font-weight:normal;color:#424242;white-space:pre;transform:scaleX(0.880);transform-origin:0 0;left:478px;">NMEYER</div>
<div style="position:absolute;top:595.04px;font-size:11px;line-height:12.287px;font-weight:normal;color:#424242;white-space:pre;left:553px;">07.10.2...</div>
<div style="position:absolute;top:595.04px;font-size:11px;line-height:12.287px;font-weight:normal;color:#424242;white-space:pre;transform:scaleX(0.000);transform-origin:0 0;left:608px;"></div>
<div style="position:absolute;top:595.04px;font-size:11px;line-height:12.287px;font-weight:normal;color:#424242;white-space:pre;right:8px;">0</div>
<svg style="position:absolute;left:42px;top:615px" width="15" height="15" viewBox="0 0 15 15">
<rect x="4.5" y="0.5" width="9" height="9" fill="#e3e9f3" stroke="#c9a85a"/>
<path d="M13.5 1 V9.5 H6" fill="none" stroke="#b39050"/>
<rect x="5" y="1" width="8" height="3" fill="#3f7bd6"/>
<rect x="6" y="2" width="1" height="1" fill="#fff"/><rect x="8" y="2" width="2" height="1" fill="#fff"/><rect x="11" y="2" width="1" height="1" fill="#fff"/>
<rect x="5" y="4" width="1" height="5" fill="#3f7bd6"/>
<path d="M5.5 4 L0 14.5 L11 14.5 Z" fill="#5cb85c" stroke="#1f7a3a" stroke-width="1"/>
<path d="M5.5 6 L3 13 L5.5 13 Z" fill="#8fd48f"/>
</svg>
<div style="position:absolute;top:617.04px;font-size:11px;line-height:12.287px;font-weight:normal;color:#4a4050;white-space:pre;left:62px;">...</div>
<div style="position:absolute;top:617.04px;font-size:11px;line-height:12.287px;font-weight:normal;color:#424242;white-space:pre;transform:scaleX(0.914);transform-origin:0 0;left:81px;">YAD_CHA04</div>
<div style="position:absolute;top:617.04px;font-size:11px;line-height:12.287px;font-weight:normal;color:#424242;white-space:pre;transform:scaleX(0.914);transform-origin:0 0;left:204px;">YAD_CHA04</div>
<div style="position:absolute;top:617.04px;font-size:11px;line-height:12.287px;font-weight:normal;color:#424242;white-space:pre;left:379px;">-</div>
<div style="position:absolute;top:617.04px;font-size:11px;line-height:12.287px;font-weight:normal;color:#424242;white-space:pre;transform:scaleX(0.903);transform-origin:0 0;left:403px;">0TIME</div>
<div style="position:absolute;top:617.04px;font-size:11px;line-height:12.287px;font-weight:normal;color:#424242;white-space:pre;transform:scaleX(0.894);transform-origin:0 0;left:478px;">ADUERRSTE...</div>
<div style="position:absolute;top:617.04px;font-size:11px;line-height:12.287px;font-weight:normal;color:#424242;white-space:pre;left:553px;">19.03.2...</div>
<div style="position:absolute;top:617.04px;font-size:11px;line-height:12.287px;font-weight:normal;color:#424242;white-space:pre;transform:scaleX(0.000);transform-origin:0 0;left:608px;"></div>
<div style="position:absolute;top:617.04px;font-size:11px;line-height:12.287px;font-weight:normal;color:#424242;white-space:pre;right:8px;">0</div>
<svg style="position:absolute;left:42px;top:637px" width="15" height="15" viewBox="0 0 15 15">
<rect x="4.5" y="0.5" width="9" height="9" fill="#e3e9f3" stroke="#c9a85a"/>
<path d="M13.5 1 V9.5 H6" fill="none" stroke="#b39050"/>
<rect x="5" y="1" width="8" height="3" fill="#3f7bd6"/>
<rect x="6" y="2" width="1" height="1" fill="#fff"/><rect x="8" y="2" width="2" height="1" fill="#fff"/><rect x="11" y="2" width="1" height="1" fill="#fff"/>
<rect x="5" y="4" width="1" height="5" fill="#3f7bd6"/>
<path d="M5.5 4 L0 14.5 L11 14.5 Z" fill="#5cb85c" stroke="#1f7a3a" stroke-width="1"/>
<path d="M5.5 6 L3 13 L5.5 13 Z" fill="#8fd48f"/>
</svg>
<div style="position:absolute;top:639.04px;font-size:11px;line-height:12.287px;font-weight:normal;color:#4a4050;white-space:pre;left:62px;">...</div>
<div style="position:absolute;top:639.04px;font-size:11px;line-height:12.287px;font-weight:normal;color:#424242;white-space:pre;transform:scaleX(0.914);transform-origin:0 0;left:81px;">YAD_CHA05</div>
<div style="position:absolute;top:639.04px;font-size:11px;line-height:12.287px;font-weight:normal;color:#424242;white-space:pre;transform:scaleX(0.989);transform-origin:0 0;left:204px;">Test long text 2</div>
<div style="position:absolute;top:639.04px;font-size:11px;line-height:12.287px;font-weight:normal;color:#424242;white-space:pre;left:379px;">-</div>
<div style="position:absolute;top:639.04px;font-size:11px;line-height:12.287px;font-weight:normal;color:#424242;white-space:pre;left:403px;">-</div>
<div style="position:absolute;top:639.04px;font-size:11px;line-height:12.287px;font-weight:normal;color:#424242;white-space:pre;transform:scaleX(0.880);transform-origin:0 0;left:478px;">TSCHMIDT</div>
<div style="position:absolute;top:639.04px;font-size:11px;line-height:12.287px;font-weight:normal;color:#424242;white-space:pre;left:553px;">28.09.2...</div>
<div style="position:absolute;top:639.04px;font-size:11px;line-height:12.287px;font-weight:normal;color:#424242;white-space:pre;transform:scaleX(0.000);transform-origin:0 0;left:608px;"></div>
<div style="position:absolute;top:639.04px;font-size:11px;line-height:12.287px;font-weight:normal;color:#424242;white-space:pre;right:8px;">0</div>
<svg style="position:absolute;left:42px;top:659px" width="15" height="15" viewBox="0 0 15 15">
<rect x="4.5" y="0.5" width="9" height="9" fill="#e3e9f3" stroke="#c9a85a"/>
<path d="M13.5 1 V9.5 H6" fill="none" stroke="#b39050"/>
<rect x="5" y="1" width="8" height="3" fill="#3f7bd6"/>
<rect x="6" y="2" width="1" height="1" fill="#fff"/><rect x="8" y="2" width="2" height="1" fill="#fff"/><rect x="11" y="2" width="1" height="1" fill="#fff"/>
<rect x="5" y="4" width="1" height="5" fill="#3f7bd6"/>
<path d="M5.5 4 L0 14.5 L11 14.5 Z" fill="#5cb85c" stroke="#1f7a3a" stroke-width="1"/>
<path d="M5.5 6 L3 13 L5.5 13 Z" fill="#8fd48f"/>
</svg>
<div style="position:absolute;top:661.04px;font-size:11px;line-height:12.287px;font-weight:normal;color:#4a4050;white-space:pre;left:62px;">...</div>
<div style="position:absolute;top:661.04px;font-size:11px;line-height:12.287px;font-weight:normal;color:#424242;white-space:pre;transform:scaleX(0.914);transform-origin:0 0;left:81px;">YAD_CHA06</div>
<div style="position:absolute;top:661.04px;font-size:11px;line-height:12.287px;font-weight:normal;color:#424242;white-space:pre;transform:scaleX(0.962);transform-origin:0 0;left:204px;">Test</div>
<div style="position:absolute;top:661.04px;font-size:11px;line-height:12.287px;font-weight:normal;color:#424242;white-space:pre;left:379px;">-</div>
<div style="position:absolute;top:661.04px;font-size:11px;line-height:12.287px;font-weight:normal;color:#424242;white-space:pre;transform:scaleX(0.914);transform-origin:0 0;left:403px;">YAD_CHA01</div>
<div style="position:absolute;top:661.04px;font-size:11px;line-height:12.287px;font-weight:normal;color:#424242;white-space:pre;transform:scaleX(0.894);transform-origin:0 0;left:478px;">ADUERRSTE...</div>
<div style="position:absolute;top:661.04px;font-size:11px;line-height:12.287px;font-weight:normal;color:#424242;white-space:pre;left:553px;">26.10.2...</div>
<div style="position:absolute;top:661.04px;font-size:11px;line-height:12.287px;font-weight:normal;color:#424242;white-space:pre;transform:scaleX(0.000);transform-origin:0 0;left:608px;"></div>
<div style="position:absolute;top:661.04px;font-size:11px;line-height:12.287px;font-weight:normal;color:#424242;white-space:pre;right:8px;">0</div>
<svg style="position:absolute;left:8px;top:687px" width="11" height="7"><path d="M0.8 0.8 L5 5 L9.2 0.8" fill="none" stroke="#404040" stroke-width="1.6"/></svg>
<svg style="position:absolute;left:25px;top:681px" width="15" height="16" viewBox="0 0 15 16">
<rect x="1.5" y="0.5" width="12" height="12" fill="#d8e6f6" stroke="#a07850"/>
<path d="M1.5 4.5 H13.5 M1.5 8.5 H13.5 M5.5 0.5 V12.5 M9.5 0.5 V12.5" stroke="#c8b090" stroke-width="1"/>
<rect x="0.5" y="6.5" width="6" height="8" rx="1" fill="#f2c830" stroke="#c89a10"/>
<ellipse cx="3.5" cy="7" rx="3" ry="1.3" fill="#fbe88a" stroke="#c89a10" stroke-width="0.8"/>
</svg>
<div style="position:absolute;top:683.04px;font-size:11px;line-height:12.287px;font-weight:normal;color:#424242;white-space:pre;transform:scaleX(0.880);transform-origin:0 0;left:43px;">REP</div>
<div style="position:absolute;top:683.04px;font-size:11px;line-height:12.287px;font-weight:normal;color:#424242;white-space:pre;transform:scaleX(0.936);transform-origin:0 0;left:81px;">YAD_YAD_M01_Q0001</div>
<div style="position:absolute;top:683.04px;font-size:11px;line-height:12.287px;font-weight:normal;color:#424242;white-space:pre;transform:scaleX(0.936);transform-origin:0 0;left:204px;">YAD_YAD_M01_Q0001</div>
<div style="position:absolute;top:683.04px;font-size:11px;line-height:12.287px;font-weight:normal;color:#424242;white-space:pre;left:379px;">7.x</div>
<div style="position:absolute;top:683.04px;font-size:11px;line-height:12.287px;font-weight:normal;color:#424242;white-space:pre;transform:scaleX(0.924);transform-origin:0 0;left:403px;">YAD_M01</div>
<div style="position:absolute;top:683.04px;font-size:11px;line-height:12.287px;font-weight:normal;color:#424242;white-space:pre;transform:scaleX(0.894);transform-origin:0 0;left:478px;">ADUERRSTE...</div>
<div style="position:absolute;top:683.04px;font-size:11px;line-height:12.287px;font-weight:normal;color:#424242;white-space:pre;left:553px;">01.06.2...</div>
<div style="position:absolute;top:683.04px;font-size:11px;line-height:12.287px;font-weight:normal;color:#424242;white-space:pre;transform:scaleX(0.905);transform-origin:0 0;left:608px;">9IROG4JRJS0GSC6IYNM0AUD7Q</div>
<div style="position:absolute;top:683.04px;font-size:11px;line-height:12.287px;font-weight:normal;color:#424242;white-space:pre;right:8px;">4</div>
<svg style="position:absolute;left:42px;top:703px" width="15" height="15" viewBox="0 0 15 15">
<rect x="4.5" y="0.5" width="9" height="9" fill="#e3e9f3" stroke="#c9a85a"/>
<path d="M13.5 1 V9.5 H6" fill="none" stroke="#b39050"/>
<rect x="5" y="1" width="8" height="3" fill="#3f7bd6"/>
<rect x="6" y="2" width="1" height="1" fill="#fff"/><rect x="8" y="2" width="2" height="1" fill="#fff"/><rect x="11" y="2" width="1" height="1" fill="#fff"/>
<rect x="5" y="4" width="1" height="5" fill="#3f7bd6"/>
<path d="M5.5 4 L0 14.5 L11 14.5 Z" fill="#5cb85c" stroke="#1f7a3a" stroke-width="1"/>
<path d="M5.5 6 L3 13 L5.5 13 Z" fill="#8fd48f"/>
</svg>
<div style="position:absolute;top:705.04px;font-size:11px;line-height:12.287px;font-weight:normal;color:#4a4050;white-space:pre;left:62px;">...</div>
<div style="position:absolute;top:705.04px;font-size:11px;line-height:12.287px;font-weight:normal;color:#424242;white-space:pre;transform:scaleX(0.914);transform-origin:0 0;left:81px;">YAD_CHA01</div>
<div style="position:absolute;top:705.04px;font-size:11px;line-height:12.287px;font-weight:normal;color:#424242;white-space:pre;transform:scaleX(0.943);transform-origin:0 0;left:204px;">Test CHA 01</div>
<div style="position:absolute;top:705.04px;font-size:11px;line-height:12.287px;font-weight:normal;color:#424242;white-space:pre;left:379px;">-</div>
<div style="position:absolute;top:705.04px;font-size:11px;line-height:12.287px;font-weight:normal;color:#424242;white-space:pre;left:403px;">-</div>
<div style="position:absolute;top:705.04px;font-size:11px;line-height:12.287px;font-weight:normal;color:#424242;white-space:pre;transform:scaleX(0.880);transform-origin:0 0;left:478px;">NMEYER</div>
<div style="position:absolute;top:705.04px;font-size:11px;line-height:12.287px;font-weight:normal;color:#424242;white-space:pre;left:553px;">07.10.2...</div>
<div style="position:absolute;top:705.04px;font-size:11px;line-height:12.287px;font-weight:normal;color:#424242;white-space:pre;transform:scaleX(0.000);transform-origin:0 0;left:608px;"></div>
<div style="position:absolute;top:705.04px;font-size:11px;line-height:12.287px;font-weight:normal;color:#424242;white-space:pre;right:8px;">0</div>
<svg style="position:absolute;left:42px;top:725px" width="15" height="15" viewBox="0 0 15 15">
<rect x="4.5" y="0.5" width="9" height="9" fill="#e3e9f3" stroke="#c9a85a"/>
<path d="M13.5 1 V9.5 H6" fill="none" stroke="#b39050"/>
<rect x="5" y="1" width="8" height="3" fill="#3f7bd6"/>
<rect x="6" y="2" width="1" height="1" fill="#fff"/><rect x="8" y="2" width="2" height="1" fill="#fff"/><rect x="11" y="2" width="1" height="1" fill="#fff"/>
<rect x="5" y="4" width="1" height="5" fill="#3f7bd6"/>
<path d="M5.5 4 L0 14.5 L11 14.5 Z" fill="#5cb85c" stroke="#1f7a3a" stroke-width="1"/>
<path d="M5.5 6 L3 13 L5.5 13 Z" fill="#8fd48f"/>
</svg>
<div style="position:absolute;top:727.04px;font-size:11px;line-height:12.287px;font-weight:normal;color:#4a4050;white-space:pre;left:62px;">...</div>
<div style="position:absolute;top:727.04px;font-size:11px;line-height:12.287px;font-weight:normal;color:#424242;white-space:pre;transform:scaleX(0.914);transform-origin:0 0;left:81px;">YAD_CHA04</div>
<div style="position:absolute;top:727.04px;font-size:11px;line-height:12.287px;font-weight:normal;color:#424242;white-space:pre;transform:scaleX(0.914);transform-origin:0 0;left:204px;">YAD_CHA04</div>
<div style="position:absolute;top:727.04px;font-size:11px;line-height:12.287px;font-weight:normal;color:#424242;white-space:pre;left:379px;">-</div>
<div style="position:absolute;top:727.04px;font-size:11px;line-height:12.287px;font-weight:normal;color:#424242;white-space:pre;transform:scaleX(0.903);transform-origin:0 0;left:403px;">0TIME</div>
<div style="position:absolute;top:727.04px;font-size:11px;line-height:12.287px;font-weight:normal;color:#424242;white-space:pre;transform:scaleX(0.894);transform-origin:0 0;left:478px;">ADUERRSTE...</div>
<div style="position:absolute;top:727.04px;font-size:11px;line-height:12.287px;font-weight:normal;color:#424242;white-space:pre;left:553px;">19.03.2...</div>
<div style="position:absolute;top:727.04px;font-size:11px;line-height:12.287px;font-weight:normal;color:#424242;white-space:pre;transform:scaleX(0.000);transform-origin:0 0;left:608px;"></div>
<div style="position:absolute;top:727.04px;font-size:11px;line-height:12.287px;font-weight:normal;color:#424242;white-space:pre;right:8px;">0</div>
<svg style="position:absolute;left:42px;top:747px" width="15" height="15" viewBox="0 0 15 15">
<rect x="4.5" y="0.5" width="9" height="9" fill="#e3e9f3" stroke="#c9a85a"/>
<path d="M13.5 1 V9.5 H6" fill="none" stroke="#b39050"/>
<rect x="5" y="1" width="8" height="3" fill="#3f7bd6"/>
<rect x="6" y="2" width="1" height="1" fill="#fff"/><rect x="8" y="2" width="2" height="1" fill="#fff"/><rect x="11" y="2" width="1" height="1" fill="#fff"/>
<rect x="5" y="4" width="1" height="5" fill="#3f7bd6"/>
<path d="M5.5 4 L0 14.5 L11 14.5 Z" fill="#5cb85c" stroke="#1f7a3a" stroke-width="1"/>
<path d="M5.5 6 L3 13 L5.5 13 Z" fill="#8fd48f"/>
</svg>
<div style="position:absolute;top:749.04px;font-size:11px;line-height:12.287px;font-weight:normal;color:#4a4050;white-space:pre;left:62px;">...</div>
<div style="position:absolute;top:749.04px;font-size:11px;line-height:12.287px;font-weight:normal;color:#424242;white-space:pre;transform:scaleX(0.914);transform-origin:0 0;left:81px;">YAD_CHA05</div>
<div style="position:absolute;top:749.04px;font-size:11px;line-height:12.287px;font-weight:normal;color:#424242;white-space:pre;transform:scaleX(0.989);transform-origin:0 0;left:204px;">Test long text 2</div>
<div style="position:absolute;top:749.04px;font-size:11px;line-height:12.287px;font-weight:normal;color:#424242;white-space:pre;left:379px;">-</div>
<div style="position:absolute;top:749.04px;font-size:11px;line-height:12.287px;font-weight:normal;color:#424242;white-space:pre;left:403px;">-</div>
<div style="position:absolute;top:749.04px;font-size:11px;line-height:12.287px;font-weight:normal;color:#424242;white-space:pre;transform:scaleX(0.880);transform-origin:0 0;left:478px;">TSCHMIDT</div>
<div style="position:absolute;top:749.04px;font-size:11px;line-height:12.287px;font-weight:normal;color:#424242;white-space:pre;left:553px;">28.09.2...</div>
<div style="position:absolute;top:749.04px;font-size:11px;line-height:12.287px;font-weight:normal;color:#424242;white-space:pre;transform:scaleX(0.000);transform-origin:0 0;left:608px;"></div>
<div style="position:absolute;top:749.04px;font-size:11px;line-height:12.287px;font-weight:normal;color:#424242;white-space:pre;right:8px;">0</div>
<svg style="position:absolute;left:42px;top:769px" width="15" height="15" viewBox="0 0 15 15">
<rect x="4.5" y="0.5" width="9" height="9" fill="#e3e9f3" stroke="#c9a85a"/>
<path d="M13.5 1 V9.5 H6" fill="none" stroke="#b39050"/>
<rect x="5" y="1" width="8" height="3" fill="#3f7bd6"/>
<rect x="6" y="2" width="1" height="1" fill="#fff"/><rect x="8" y="2" width="2" height="1" fill="#fff"/><rect x="11" y="2" width="1" height="1" fill="#fff"/>
<rect x="5" y="4" width="1" height="5" fill="#3f7bd6"/>
<path d="M5.5 4 L0 14.5 L11 14.5 Z" fill="#5cb85c" stroke="#1f7a3a" stroke-width="1"/>
<path d="M5.5 6 L3 13 L5.5 13 Z" fill="#8fd48f"/>
</svg>
<div style="position:absolute;top:771.04px;font-size:11px;line-height:12.287px;font-weight:normal;color:#4a4050;white-space:pre;left:62px;">...</div>
<div style="position:absolute;top:771.04px;font-size:11px;line-height:12.287px;font-weight:normal;color:#424242;white-space:pre;transform:scaleX(0.914);transform-origin:0 0;left:81px;">YAD_CHA06</div>
<div style="position:absolute;top:771.04px;font-size:11px;line-height:12.287px;font-weight:normal;color:#424242;white-space:pre;transform:scaleX(0.962);transform-origin:0 0;left:204px;">Test</div>
<div style="position:absolute;top:771.04px;font-size:11px;line-height:12.287px;font-weight:normal;color:#424242;white-space:pre;left:379px;">-</div>
<div style="position:absolute;top:771.04px;font-size:11px;line-height:12.287px;font-weight:normal;color:#424242;white-space:pre;transform:scaleX(0.914);transform-origin:0 0;left:403px;">YAD_CHA01</div>
<div style="position:absolute;top:771.04px;font-size:11px;line-height:12.287px;font-weight:normal;color:#424242;white-space:pre;transform:scaleX(0.894);transform-origin:0 0;left:478px;">ADUERRSTE...</div>
<div style="position:absolute;top:771.04px;font-size:11px;line-height:12.287px;font-weight:normal;color:#424242;white-space:pre;left:553px;">26.10.2...</div>
<div style="position:absolute;top:771.04px;font-size:11px;line-height:12.287px;font-weight:normal;color:#424242;white-space:pre;transform:scaleX(0.000);transform-origin:0 0;left:608px;"></div>
<div style="position:absolute;top:771.04px;font-size:11px;line-height:12.287px;font-weight:normal;color:#424242;white-space:pre;right:8px;">0</div>
</body></html>
